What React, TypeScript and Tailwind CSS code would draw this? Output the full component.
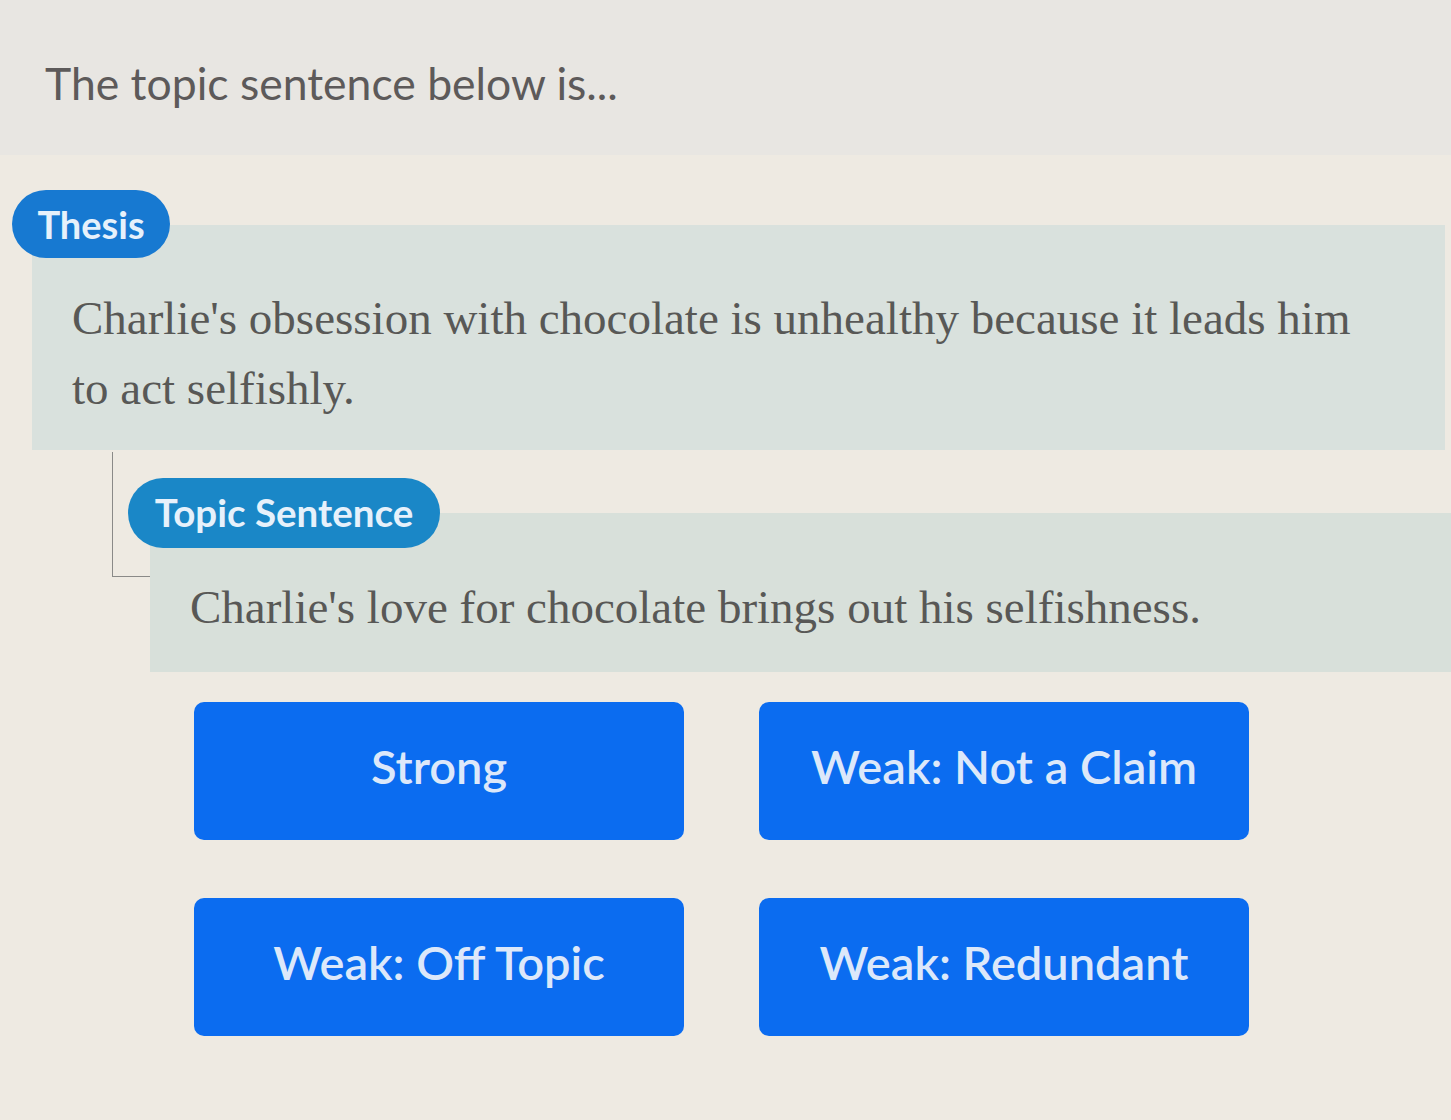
import React from "react"

const CHOICES = ["Strong", "Weak: Not a Claim", "Weak: Off Topic", "Weak: Redundant"]

export default function App() {
  return (
    <div className="min-h-[1120px] w-[1451px] overflow-hidden bg-[#eeeae2] font-['Lato',sans-serif]">
      {/* Prompt */}
      <header className="flex h-[155px] items-center bg-[#e8e6e2] pl-[45px] pt-[12px]">
        <h1 className="text-[44.5px] text-[#5d5a5a]">The topic sentence below is...</h1>
      </header>

      {/* Thesis */}
      <section className="pt-[35px]">
        <div className="relative z-10 ml-[12px] flex h-[68px] w-[158px] items-center justify-center rounded-full bg-[#1779d1]">
          <span className="text-[38px] font-bold text-[#e6f1fb]">Thesis</span>
        </div>
        <div className="mt-[-33px] ml-[32px] w-[1413px] bg-[#d9e1dd] pb-[27px] pl-[40px] pr-[50px] pt-[58px] font-['Liberation_Serif',serif] text-[47px] leading-[70px] text-[#585856]">
          Charlie's obsession with chocolate is unhealthy because it leads him to act selfishly.
        </div>
      </section>

      {/* Topic sentence */}
      <section className="relative pt-[28px]">
        <div className="absolute left-[112px] top-[2px] h-[125px] w-[40px] border-b border-l border-[#8a8a88]" />
        <div className="relative z-10 ml-[128px] flex h-[70px] w-[312px] items-center justify-center rounded-full bg-[#1a87c7]">
          <span className="text-[38.5px] font-bold text-[#e6f1fb]">Topic Sentence</span>
        </div>
        <div className="relative mt-[-35px] ml-[150px] bg-[#d8e0da] pb-[30px] pl-[40px] pt-[59px] font-['Liberation_Serif',serif] text-[47px] leading-[70px] text-[#585856]">
          Charlie's love for chocolate brings out his selfishness.
        </div>
      </section>

      {/* Answer choices */}
      <div className="grid w-fit grid-cols-[490px_490px] gap-x-[75px] gap-y-[58px] pl-[194px] pt-[30px]">
        {CHOICES.map((c) => (
          <button
            key={c}
            className="flex h-[138px] items-center justify-center rounded-[10px] bg-[#0b6cf0] pb-[10px] text-[47px] font-semibold text-[#dce8fa]"
          >
            {c}
          </button>
        ))}
      </div>
    </div>
  )
}
